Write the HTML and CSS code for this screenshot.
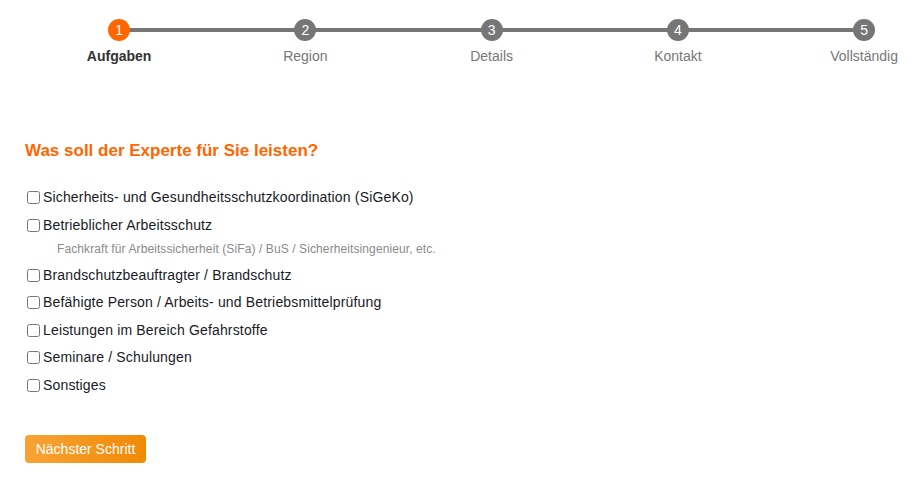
FILE: index.html
```html
<!DOCTYPE html>
<html lang="de">
<head>
<meta charset="utf-8">
<title>Was soll der Experte für Sie leisten?</title>
<link rel="stylesheet" href="styles.css">
</head>
<body>
<div class="steps">
  <div class="step active"><span class="dot">1</span><span class="label">Aufgaben</span></div>
  <div class="step"><span class="dot">2</span><span class="label">Region</span></div>
  <div class="step"><span class="dot">3</span><span class="label">Details</span></div>
  <div class="step"><span class="dot">4</span><span class="label">Kontakt</span></div>
  <div class="step last"><span class="dot">5</span><span class="label">Vollständig</span></div>
</div>
<main class="form">
  <h2 class="title">Was soll der Experte für Sie leisten?</h2>
  <div class="options">
    <label class="opt"><input type="checkbox"><span>Sicherheits- und Gesundheitsschutzkoordination (SiGeKo)</span></label>
    <label class="opt with-sub"><input type="checkbox"><span>Betrieblicher Arbeitsschutz</span></label>
    <div class="sub">Fachkraft für Arbeitssicherheit (SiFa) / BuS / Sicherheitsingenieur, etc.</div>
    <label class="opt"><input type="checkbox"><span>Brandschutzbeauftragter / Brandschutz</span></label>
    <label class="opt"><input type="checkbox"><span>Befähigte Person / Arbeits- und Betriebsmittelprüfung</span></label>
    <label class="opt"><input type="checkbox"><span>Leistungen im Bereich Gefahrstoffe</span></label>
    <label class="opt"><input type="checkbox"><span>Seminare / Schulungen</span></label>
    <label class="opt"><input type="checkbox"><span>Sonstiges</span></label>
  </div>
  <button class="next" type="button">Nächster Schritt</button>
</main>
</body>
</html>
```
FILE: styles.css
```css
html, body {
  margin: 0;
  padding: 0;
  background: #fff;
  overflow: hidden;
  font-family: "Liberation Sans", Arial, sans-serif;
}

.steps {
  display: grid;
  grid-template-columns: repeat(5, 186.25px);
  margin-left: 26px;
  width: 931.25px;
  padding-top: 19px;
}

.step {
  position: relative;
  display: flex;
  flex-direction: column;
  align-items: center;
}

.step::after {
  content: "";
  position: absolute;
  top: 9px;
  left: 50%;
  width: 100%;
  height: 4px;
  background: #767676;
  z-index: 0;
}

.step.last::after {
  display: none;
}

.dot {
  position: relative;
  z-index: 1;
  width: 22px;
  height: 22px;
  border-radius: 50%;
  background: #767676;
  color: #fff;
  font-size: 14px;
  line-height: 22px;
  text-align: center;
}

.step.active .dot {
  background: #ff6600;
}

.label {
  margin-top: 7px;
  font-size: 14px;
  line-height: 16px;
  color: #777;
  white-space: nowrap;
}

.step.active .label {
  color: #333;
  font-weight: bold;
}

.form {
  padding: 0 25px;
}

.title {
  margin: 77px 0 26px;
  font-size: 17px;
  line-height: 20px;
  font-weight: bold;
  color: #ff6600;
}

.options {
  display: flex;
  flex-direction: column;
}

.opt {
  display: flex;
  align-items: center;
  height: 20px;
  margin-bottom: 7.5px;
  font-size: 14px;
  letter-spacing: 0.16px;
  color: #1a1a26;
}

.opt input {
  margin: 1px 3px 0 2px;
  width: 13px;
  height: 13px;
}

.opt.with-sub {
  margin-bottom: 0;
}

.sub {
  margin: 6.5px 0 7.5px 32px;
  font-size: 12px;
  line-height: 16px;
  letter-spacing: 0.1px;
  color: #8a8a8a;
}

.next {
  margin-top: 33px;
  width: 121px;
  height: 28px;
  padding: 0;
  border: 0;
  border-radius: 4px;
  background: linear-gradient(to right, #f8a336, #f18a05);
  color: #fff;
  font-family: "Liberation Sans", Arial, sans-serif;
  font-size: 14px;
  cursor: pointer;
}
```
